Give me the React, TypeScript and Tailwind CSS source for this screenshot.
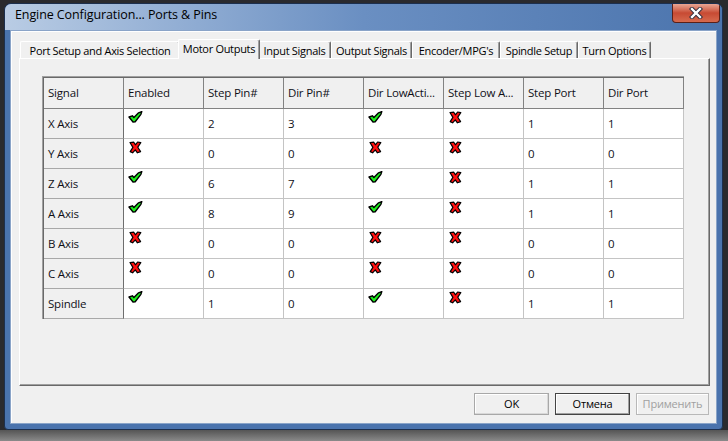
import React from "react";

const SEGOE = { fontFamily: '"Open Sans", "Noto Sans", sans-serif' };

function Check() {
  return (
    <svg width="15" height="12" viewBox="0 0 15 12">
      <path
        d="M1 6 L4.4 4.8 L5.9 6.6 L10.6 1.8 L13.8 0.6 L12.9 3.4 L7.2 10.8 L5 11 Z"
        fill="#1ef01e"
        stroke="#000"
        strokeWidth="1.4"
        strokeLinejoin="round"
      />
    </svg>
  );
}

function Cross() {
  return (
    <svg width="13" height="13" viewBox="0 0 13 13">
      <path
        d="M1 1.5 L4.8 1.2 L6.4 3.8 L8.6 1 L11.8 1.6 L8.8 6.2 L11.6 10.6 L8.4 11.8 L6.3 8.8 L3.6 11.8 L1.2 10.6 L3.9 6.4 Z"
        fill="#ff1010"
        stroke="#000"
        strokeWidth="1.2"
        strokeLinejoin="round"
      />
    </svg>
  );
}

type Cell = string | "Y" | "N";

const headers = ["Signal", "Enabled", "Step Pin#", "Dir Pin#", "Dir LowActi...", "Step Low A...", "Step Port", "Dir Port"];
const rows: [string, ...Cell[]][] = [
  ["X Axis", "Y", "2", "3", "Y", "N", "1", "1"],
  ["Y Axis", "N", "0", "0", "N", "N", "0", "0"],
  ["Z Axis", "Y", "6", "7", "Y", "N", "1", "1"],
  ["A Axis", "Y", "8", "9", "Y", "N", "1", "1"],
  ["B Axis", "N", "0", "0", "N", "N", "0", "0"],
  ["C Axis", "N", "0", "0", "N", "N", "0", "0"],
  ["Spindle", "Y", "1", "0", "Y", "N", "1", "1"],
];

const tabs = [
  { label: "Port Setup and Axis Selection", w: "w-[160px]" },
  { label: "Motor Outputs", w: "w-[82px]", active: true },
  { label: "Input Signals", w: "w-[73px]" },
  { label: "Output Signals", w: "w-[81px]" },
  { label: "Encoder/MPG's", w: "w-[88px]" },
  { label: "Spindle Setup", w: "w-[78px]" },
  { label: "Turn Options", w: "w-[73px]" },
];

export default function App() {
  return (
    <div className="w-[728px] h-[441px] overflow-hidden bg-[#2a2a2e] flex flex-col" style={SEGOE}>
      <div className="flex pl-[4px] pt-[3px]">
        {/* window */}
        <div className="w-[719px] h-[427px] flex flex-col rounded-t-[7px] rounded-b-[4px] border border-[#1c2f4e] bg-[#4a73ad] overflow-hidden">
          {/* title bar */}
          <div className="h-[26px] flex items-start justify-between bg-gradient-to-r from-[#b9cce4] via-[#6a8fc2] to-[#4b74ad]">
            <div className="pl-[10px] pt-[5px] text-[12.5px] text-black leading-none tracking-[-0.1px]">
              Engine Configuration... Ports &amp; Pins
            </div>
            <div className="mr-[2px] w-[48px] h-[19px] rounded-b-[4px] border border-[#5a2018] border-t-0 bg-gradient-to-b from-[#e8a594] via-[#c74a33] to-[#d66a4e] flex items-center justify-center">
              <svg width="14" height="12" viewBox="0 0 14 12">
                <path d="M3 2 L11 10 M11 2 L3 10" stroke="#2a2a3a" strokeWidth="4.2" strokeLinecap="square" />
                <path d="M3 2 L11 10 M11 2 L3 10" stroke="#ffffff" strokeWidth="2.4" strokeLinecap="square" />
              </svg>
            </div>
          </div>
          {/* frame + client */}
          <div className="flex-1 flex px-[5px] pb-[5px]">
            <div className="flex-1 flex flex-col bg-[#f0f0f0] border border-[#8aa4c8] shadow-[inset_1px_1px_0_#ffffff]">
              <div className="pl-[8px] pr-[6px] pt-[8px] flex flex-col">
                {/* tab row */}
                <div className="h-[19px] flex items-end pl-[1px] text-[11px] tracking-[-0.3px] text-black">
                  {tabs.map((t) =>
                    t.active ? (
                      <div
                        key={t.label}
                        className={`${t.w} h-[20px] -mx-[2px] -mb-[1px] relative z-10 bg-[#f0f0f0] border-t border-l border-white border-r border-r-[#696969] shadow-[inset_-1px_0_0_#a0a0a0] rounded-t-[2px] flex items-start justify-center pt-[2px] leading-none`}
                      >
                        <span className="pt-[1px]">{t.label}</span>
                      </div>
                    ) : (
                      <div
                        key={t.label}
                        className={`${t.w} h-[17px] bg-[#f0f0f0] border-t border-l border-white border-r border-r-[#696969] shadow-[inset_-1px_0_0_#a0a0a0] rounded-t-[2px] flex items-center justify-center leading-none`}
                      >
                        {t.label}
                      </div>
                    )
                  )}
                </div>
                {/* panel */}
                <div className="h-[328px] border-t border-l border-white border-r border-b border-r-[#696969] border-b-[#696969] shadow-[inset_-1px_-1px_0_#a0a0a0] pl-[22px] pt-[17px]">
                  <div className="w-[642px] border-t border-l border-[#a0a0a0] shadow-[inset_1px_1px_0_#696969] pt-[1px] pl-[1px] grid grid-cols-[80px_80px_80px_80px_80px_80px_80px_80px] text-[11.5px] text-[#101018]">
                    {headers.map((h) => (
                      <div
                        key={h}
                        className="h-[31px] bg-[#f0f0f0] border-r border-b border-[#828282] flex items-center pl-[4px] whitespace-nowrap overflow-hidden tracking-[-0.2px]"
                      >
                        {h}
                      </div>
                    ))}
                    {rows.map((r) => (
                      <React.Fragment key={r[0]}>
                        <div className="h-[30px] bg-[#f0f0f0] border-r border-r-[#6e6e6e] border-b border-b-[#a8a8a8] flex items-center pl-[4px] pt-[1px] tracking-[-0.2px]">
                          {r[0]}
                        </div>
                        {r.slice(1).map((c, i) => (
                          <div
                            key={i}
                            className="h-[30px] bg-white border-r border-b border-[#c4c4c4] pl-[4px]"
                          >
                            {c === "Y" ? (
                              <div className="pt-[2px]">
                                <Check />
                              </div>
                            ) : c === "N" ? (
                              <div className="pt-[2px] pl-[1px]">
                                <Cross />
                              </div>
                            ) : (
                              <div className="pt-[8px] leading-[14px]">{c}</div>
                            )}
                          </div>
                        ))}
                      </React.Fragment>
                    ))}
                  </div>
                </div>
                {/* buttons */}
                <div className="flex justify-end gap-[6px] pt-[7px] pr-[1px] text-[11px] tracking-[-0.2px]">
                  <div className="w-[75px] h-[22px] bg-[#f0f0f0] border border-[#a8a8a8] shadow-[inset_-1px_-1px_0_#d8d8d8,inset_1px_1px_0_#ffffff] flex items-center justify-center text-black">
                    OK
                  </div>
                  <div className="w-[75px] h-[22px] bg-[#f0f0f0] border border-[#444444] shadow-[inset_-1px_-1px_0_#a0a0a0,inset_1px_1px_0_#ffffff] flex items-center justify-center text-black">
                    Отмена
                  </div>
                  <div className="w-[73px] h-[22px] bg-[#f0f0f0] border border-[#b8b8b8] shadow-[inset_1px_1px_0_#ffffff] flex items-center justify-center text-[#a0a0a0]">
                    Применить
                  </div>
                </div>
              </div>
            </div>
          </div>
        </div>
      </div>
      <div className="flex-1 bg-gradient-to-b from-[#555555] to-[#8a8a8a]" />
    </div>
  );
}
